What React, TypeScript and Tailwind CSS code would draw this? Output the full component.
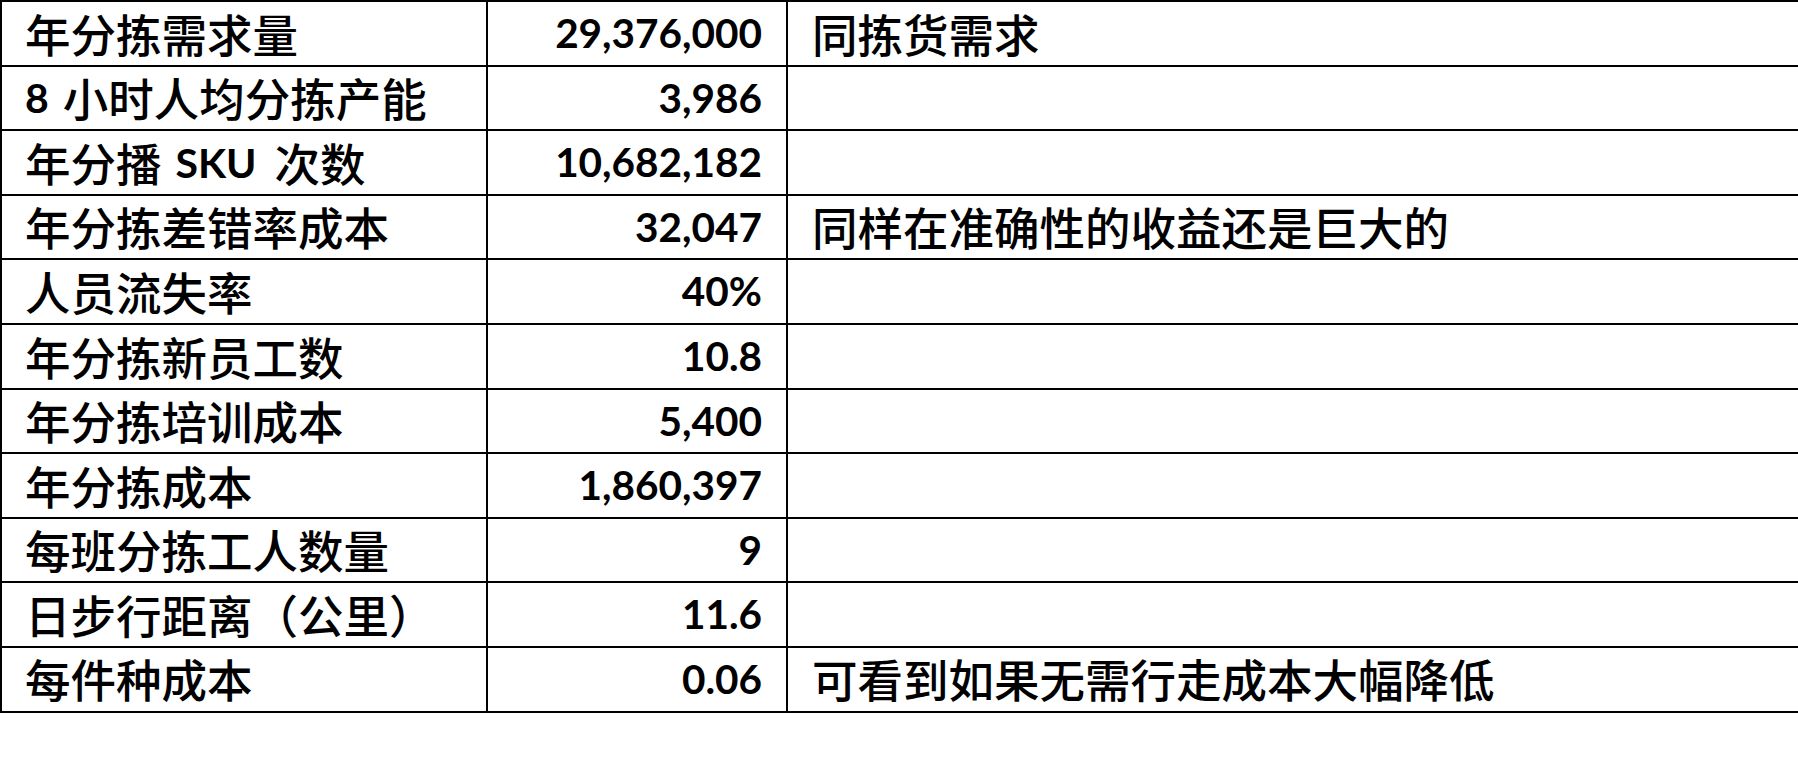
import React from 'react'

type Row = { label: React.ReactNode; value: string; note?: string }

const latin = 'font-bold font-["Lato","Noto_Sans_CJK_SC",sans-serif]'

const rows: Row[] = [
  { label: '年分拣需求量', value: '29,376,000', note: '同拣货需求' },
  { label: <><span className={`${latin} text-[41px] mr-[14px]`}>8</span>小时人均分拣产能</>, value: '3,986' },
  { label: <>年分播<span className={`${latin} text-[41px] ml-[14px] mr-[18px]`}>SKU</span>次数</>, value: '10,682,182' },
  { label: '年分拣差错率成本', value: '32,047', note: '同样在准确性的收益还是巨大的' },
  { label: '人员流失率', value: '40%' },
  { label: '年分拣新员工数', value: '10.8' },
  { label: '年分拣培训成本', value: '5,400' },
  { label: '年分拣成本', value: '1,860,397' },
  { label: '每班分拣工人数量', value: '9' },
  { label: '日步行距离（公里）', value: '11.6' },
  { label: '每件种成本', value: '0.06', note: '可看到如果无需行走成本大幅降低' },
]

export default function App() {
  return (
    <div className="w-[1798px] h-[774px] bg-white overflow-hidden text-black">
      <div className="border-t-2 border-l-2 border-black w-[1800px]">
        {rows.map((r, i) => (
          <div key={i} className="flex h-[64.6px] border-b-2 border-black">
            <div className='w-[486px] shrink-0 border-r-2 border-black flex items-center pl-[23px] text-[45.5px] leading-none font-medium font-["Noto_Sans_CJK_SC",sans-serif] whitespace-nowrap'>
              {r.label}
            </div>
            <div className='w-[300px] shrink-0 border-r-2 border-black flex items-center justify-end pr-[24px] text-[40.5px] leading-none font-bold font-["Lato",sans-serif]'>
              {r.value}
            </div>
            <div className='flex-1 flex items-center pl-[24px] text-[45.5px] leading-none font-medium font-["Noto_Sans_CJK_SC",sans-serif] whitespace-nowrap'>
              {r.note}
            </div>
          </div>
        ))}
      </div>
    </div>
  )
}
